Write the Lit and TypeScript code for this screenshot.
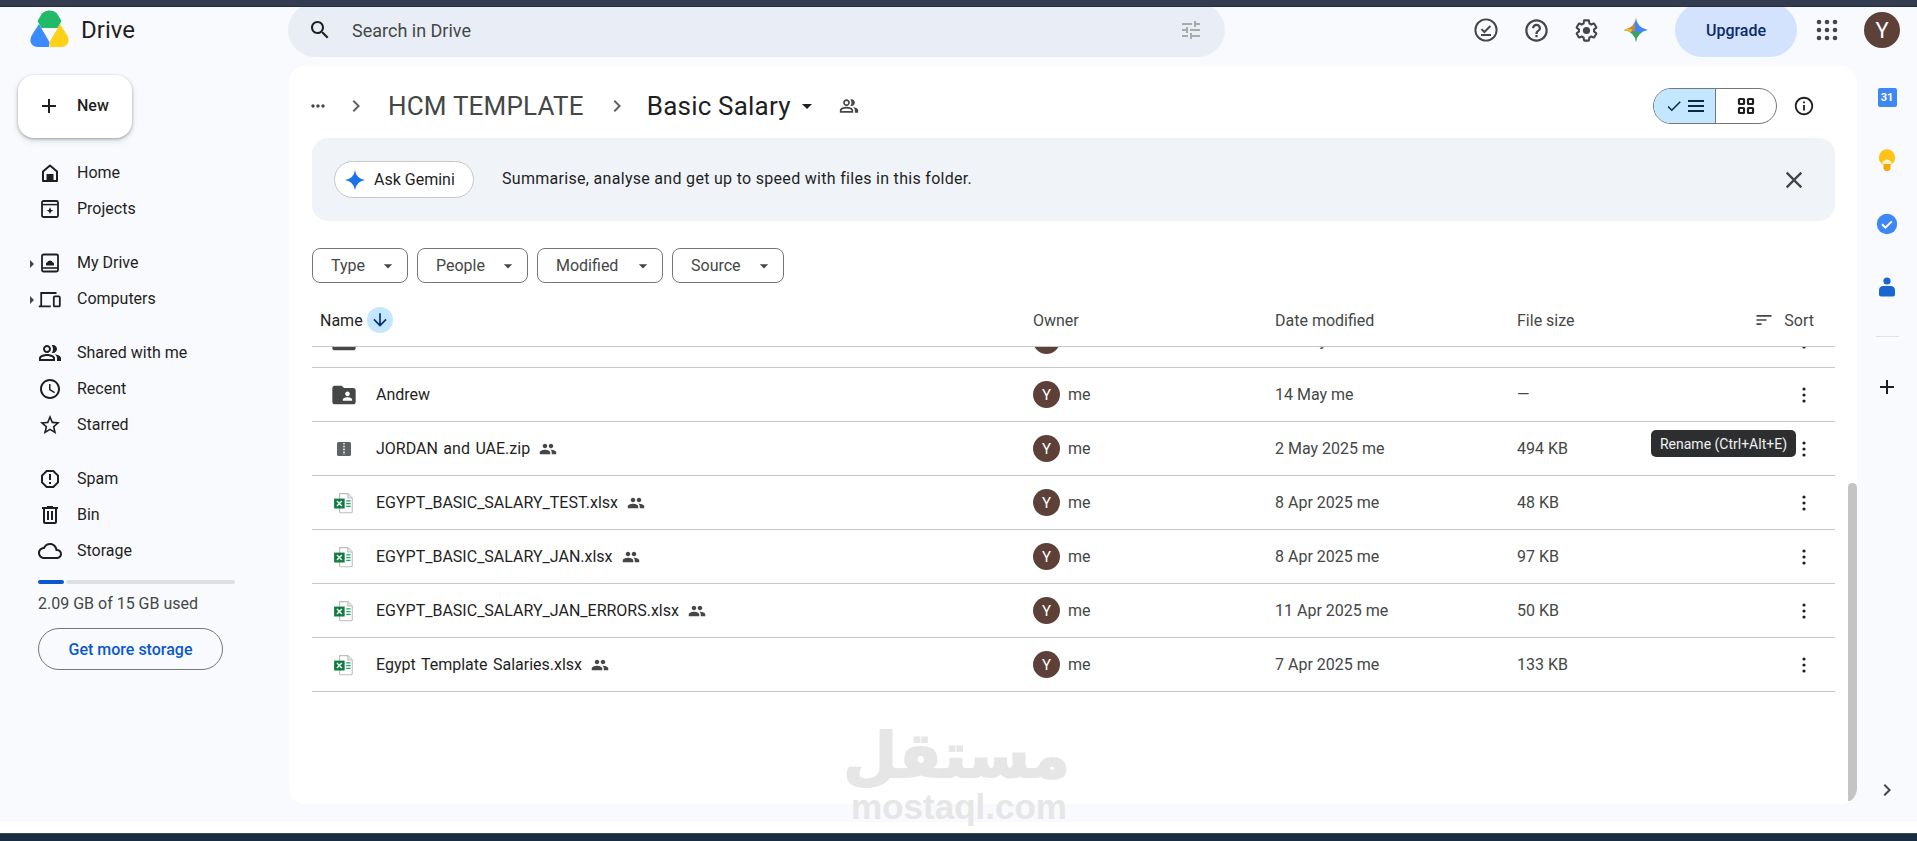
import { LitElement, html, svg, css } from "lit";
import { customElement } from "lit/decorators.js";

const P = {
  chevron: "M8.59 16.59L13.17 12 8.59 7.41 10 6l6 6-6 6z",
  shared: "M16.67 13.13C18.04 14.06 19 15.32 19 17v3h4v-3c0-2.18-3.57-3.47-6.33-3.87zM15 12c2.21 0 4-1.79 4-4s-1.79-4-4-4c-.47 0-.91.1-1.33.24C14.5 5.27 15 6.58 15 8s-.5 2.73-1.33 3.76c.42.14.86.24 1.33.24zM9 12c2.21 0 4-1.79 4-4s-1.79-4-4-4-4 1.79-4 4 1.79 4 4 4zm0-6c1.1 0 2 .9 2 2s-.9 2-2 2-2-.9-2-2 .9-2 2-2zM9 13c-2.67 0-8 1.34-8 4v3h16v-3c0-2.66-5.33-4-8-4zm6 5H3v-.99C3.2 16.29 6.3 15 9 15s5.8 1.29 6 2v1z",
  clock: "M11.99 2C6.47 2 2 6.48 2 12s4.47 10 9.99 10C17.52 22 22 17.52 22 12S17.52 2 11.99 2zM12 20c-4.42 0-8-3.58-8-8s3.58-8 8-8 8 3.58 8 8-3.58 8-8 8zM12.5 7H11v6l5.25 3.15.75-1.23-4.5-2.67z",
  star: "M22 9.24l-7.19-.62L12 2 9.19 8.63 2 9.24l5.46 4.73L5.82 21 12 17.27 18.18 21l-1.63-7.03L22 9.24zM12 15.4l-3.76 2.27 1-4.28-3.32-2.88 4.38-.38L12 6.1l1.71 4.04 4.38.38-3.32 2.88 1 4.28L12 15.4z",
  spam: "M15.73 3H8.27L3 8.27v7.46L8.27 21h7.46L21 15.73V8.27L15.73 3zM19 14.9L14.9 19H9.1L5 14.9V9.1L9.1 5h5.8L19 9.1v5.8zM11 7h2v6h-2zM11 15h2v2h-2z",
  bin: "M15 4V3H9v1H4v2h1v13c0 1.1.9 2 2 2h10c1.1 0 2-.9 2-2V6h1V4h-5zm2 15H7V6h10v13zM9 8h2v9H9zm4 0h2v9h-2z",
  cloud: "M19.35 10.04C18.67 6.59 15.64 4 12 4 9.11 4 6.6 5.64 5.35 8.04 2.34 8.36 0 10.91 0 14c0 3.31 2.69 6 6 6h13c2.76 0 5-2.24 5-5 0-2.64-2.05-4.78-4.65-4.96zM19 18H6c-2.21 0-4-1.79-4-4 0-2.05 1.53-3.76 3.56-3.97l1.07-.11.5-.95C8.08 7.14 9.94 6 12 6c2.62 0 4.88 1.86 5.39 4.43l.3 1.5 1.53.11c1.56.1 2.78 1.41 2.78 2.96 0 1.65-1.35 3-3 3z",
  search: "M15.5 14h-.79l-.28-.27C15.41 12.59 16 11.11 16 9.5 16 5.91 13.09 3 9.5 3S3 5.91 3 9.5 5.91 16 9.5 16c1.61 0 3.09-.59 4.23-1.57l.27.28v.79l5 4.99L20.49 19l-4.99-5zm-6 0C7.01 14 5 11.99 5 9.5S7.01 5 9.5 5 14 7.01 14 9.5 11.99 14 9.5 14z",
  tune: "M3 17v2h6v-2H3zM3 5v2h10V5H3zm10 16v-2h8v-2h-8v-2h-2v6h2zM7 9v2H3v2h4v2h2V9H7zm14 4v-2H11v2h10zm-6-4h2V7h4V5h-4V3h-2v6z",
  help: "M11 18h2v-2h-2v2zm1-16C6.48 2 2 6.48 2 12s4.48 10 10 10 10-4.48 10-10S17.52 2 12 2zm0 18c-4.41 0-8-3.59-8-8s3.59-8 8-8 8 3.59 8 8-3.59 8-8 8zm0-14c-2.21 0-4 1.79-4 4h2c0-1.1.9-2 2-2s2 .9 2 2c0 2-3 1.75-3 5h2c0-2.25 3-2.5 3-5 0-2.21-1.79-4-4-4z",
  info: "M11 7h2v2h-2zm0 4h2v6h-2zm1-9C6.48 2 2 6.48 2 12s4.48 10 10 10 10-4.48 10-10S17.52 2 12 2zm0 18c-4.41 0-8-3.59-8-8s3.59-8 8-8 8 3.59 8 8-3.59 8-8 8z",
  folderShared: "M20 6h-8l-2-2H4c-1.1 0-2 .9-2 2v12c0 1.1.9 2 2 2h16c1.1 0 2-.9 2-2V8c0-1.1-.9-2-2-2zm-5 3c1.1 0 2 .9 2 2s-.9 2-2 2-2-.9-2-2 .9-2 2-2zm4 8h-8v-1c0-1.33 2.67-2 4-2s4 .67 4 2v1z",
  people: "M16 11c1.66 0 2.99-1.34 2.99-3S17.66 5 16 5c-1.66 0-3 1.34-3 3s1.34 3 3 3zm-8 0c1.66 0 2.99-1.34 2.99-3S9.66 5 8 5C6.34 5 5 6.34 5 8s1.34 3 3 3zm0 2c-2.33 0-7 1.17-7 3.5V19h14v-2.5c0-2.33-4.67-3.5-7-3.5zm8 0c-.29 0-.62.02-.97.05 1.16.84 1.97 1.97 1.97 3.45V19h6v-2.5c0-2.33-4.67-3.5-7-3.5z",
  plus: "M19 13h-6v6h-2v-6H5v-2h6V5h2v6h6v2z",
  close: "M19 6.41L17.59 5 12 10.59 6.41 5 5 6.41 10.59 12 5 17.59 6.41 19 12 13.41 17.59 19 19 17.59 13.41 12z",
  caret: "M7 10l5 5 5-5z",
  down: "M20 12l-1.41-1.41L13 16.17V4h-2v12.17l-5.58-5.59L4 12l8 8 8-8z",
  check: "M9 16.17L4.83 12l-1.42 1.41L9 19 21 7l-1.41-1.41z",
  sort: "M3 18h6v-2H3v2zM3 6v2h18V6H3zm0 7h12v-2H3v2z",
  spark: "M12 1Q13 10 23 12Q13 14 12 23Q11 14 1 12Q11 10 12 1Z",
  more: "M6 10c-1.1 0-2 .9-2 2s.9 2 2 2 2-.9 2-2-.9-2-2-2zm12 0c-1.1 0-2 .9-2 2s.9 2 2 2 2-.9 2-2-.9-2-2-2zm-6 0c-1.1 0-2 .9-2 2s.9 2 2 2 2-.9 2-2-.9-2-2-2z",
};

const icon = (d: string, size = 24, color = "currentColor") => html`<svg class="ic" width=${size} height=${size} viewBox="0 0 24 24" fill=${color}><path d=${d}></path></svg>`;

const homeIcon = html`<svg class="ic" width="24" height="24" viewBox="0 0 24 24"><path d="M5 10.5L12 4.6l7 5.9V20H5z" fill="none" stroke="#1f1f1f" stroke-width="2" stroke-linejoin="round"></path><rect x="8.5" y="13" width="7" height="7" fill="#1f1f1f"></rect></svg>`;
const projectsIcon = html`<svg class="ic" width="24" height="24" viewBox="0 0 24 24"><rect x="4" y="4" width="16" height="16" rx="1.5" fill="none" stroke="#1f1f1f" stroke-width="1.8"></rect><path d="M4 7.6h16" stroke="#1f1f1f" stroke-width="1.5"></path><path d="M12 10.2Q12.4 13 15.4 13.6Q12.4 14.2 12 17Q11.6 14.2 8.6 13.6Q11.6 13 12 10.2Z" fill="#1f1f1f"></path></svg>`;
const driveIcon = html`<svg class="ic" width="24" height="24" viewBox="0 0 24 24"><rect x="4" y="3.5" width="16" height="17" rx="1.5" fill="none" stroke="#1f1f1f" stroke-width="1.8"></rect><path d="M4 17h16" stroke="#1f1f1f" stroke-width="1.6"></path><path d="M8 14.5v-1.6a1.6 1.6 0 0 1 1.3-1.6 2.9 2.9 0 0 1 5.4 0A1.6 1.6 0 0 1 16 12.9v1.6z" fill="#1f1f1f"></path></svg>`;
const computersIcon = html`<svg class="ic" width="24" height="24" viewBox="0 0 24 24"><path d="M3.2 18.5V6h15.3M.8 19.4h12" fill="none" stroke="#1f1f1f" stroke-width="1.8"></path><rect x="15.8" y="9.4" width="6" height="10" rx="1" fill="none" stroke="#1f1f1f" stroke-width="1.8"></rect></svg>`;
const offlineIcon = html`<svg class="ic" width="26" height="26" viewBox="0 0 24 24" fill="none" stroke="#444746" stroke-width="1.8"><circle cx="12" cy="12" r="9.8"></circle><path d="M7.8 11.2l2.7 2.7 5.6-5.6M7.4 16.6h9.2"></path></svg>`;
const gearIcon = html`<svg class="ic" width="27" height="27" viewBox="0 0 24 24"><path d="M19.43 12.98c.04-.32.07-.64.07-.98s-.03-.66-.07-.98l2.11-1.65c.19-.15.24-.42.12-.64l-2-3.46c-.12-.22-.39-.3-.61-.22l-2.49 1c-.52-.4-1.08-.73-1.69-.98l-.38-2.65C14.46 2.18 14.25 2 14 2h-4c-.25 0-.46.18-.49.42l-.38 2.65c-.61.25-1.17.59-1.69.98l-2.49-1c-.23-.09-.49 0-.61.22l-2 3.46c-.13.22-.07.49.12.64l2.11 1.65c-.04.32-.07.65-.07.98s.03.66.07.98l-2.11 1.65c-.19.15-.24.42-.12.64l2 3.46c.12.22.39.3.61.22l2.49-1c.52.4 1.08.73 1.69.98l.38 2.65c.03.24.24.42.49.42h4c.25 0 .46-.18.49-.42l.38-2.65c.61-.25 1.17-.59 1.69-.98l2.49 1c.23.09.49 0 .61-.22l2-3.46c.12-.22.07-.49-.12-.64l-2.11-1.65z" fill="none" stroke="#444746" stroke-width="2" transform="translate(1.2 1.2) scale(.9)"></path><circle cx="12" cy="12" r="3.2" fill="#444746"></circle></svg>`;
const geminiIcon = html`<svg class="ic" width="26" height="26" viewBox="0 0 24 24"><defs><clipPath id="gem"><path d=${P.spark}></path></clipPath></defs><g clip-path="url(#gem)"><rect width="24" height="24" fill="#4285f4"></rect><rect width="11" height="13" fill="#c98a3c"></rect><rect y="11" width="8" height="3" fill="#f9bc15"></rect><rect x="7" y="14" width="10" height="10" fill="#34a853"></rect></g></svg>`;
const appsIcon = html`<svg class="ic" width="24" height="24" viewBox="0 0 24 24" fill="#444746">${[4, 12, 20].map((y) => [4, 12, 20].map((x) => svg`<circle cx=${x} cy=${y} r="2.3"></circle>`))}</svg>`;
const gridIcon = html`<svg class="ic" width="20" height="20" viewBox="0 0 20 20" fill="none" stroke="#1f1f1f" stroke-width="2.2">${[3, 12].map((y) => [3, 12].map((x) => svg`<rect x=${x} y=${y} width="5" height="5" rx=".6"></rect>`))}</svg>`;
const listIcon = html`<svg class="ic" width="18" height="18" viewBox="0 0 18 18"><path d="M1 4h16M1 9h16M1 14h16" stroke="#0b2a44" stroke-width="2"></path></svg>`;
const dotsIcon = html`<svg class="ic" width="20" height="20" viewBox="0 0 20 20" fill="#1f1f1f"><circle cx="10" cy="4" r="1.6"></circle><circle cx="10" cy="10" r="1.6"></circle><circle cx="10" cy="16" r="1.6"></circle></svg>`;
const excelIcon = html`<svg class="ic" width="22" height="22" viewBox="0 0 20 20"><path d="M6 1.5h7.5l4 4V18a.8.8 0 0 1-.8.8H6.8A.8.8 0 0 1 6 18z" fill="#fff" stroke="#bdbdbd"></path><path d="M13.5 1.5v4h4" fill="#e8e8e8" stroke="#bdbdbd"></path><rect x="1" y="6" width="9.6" height="9" fill="#107c41"></rect><path d="M3.6 8.2l4.4 4.6M8 8.2l-4.4 4.6" stroke="#fff" stroke-width="1.2"></path><path d="M12 8h4M12 10.5h4M12 13h4" stroke="#21a366" stroke-width="1.2"></path></svg>`;
const zipIcon = html`<svg class="ic" width="20" height="20" viewBox="0 0 20 20"><rect x="3" y="3" width="14" height="14" rx="1.5" fill="#5f6368"></rect><path d="M9 4.5h2M9 7.5h2M9 10.5h2M9 13.5h2" stroke="#d5d5d5" stroke-width="1"></path><path d="M11 6h-2M11 9h-2M11 12h-2M11 15h-2" stroke="#a9a9a9" stroke-width="1"></path></svg>`;
const logo = html`<svg width="39" height="37" viewBox="0 0 39 37"><path d="M9 14L19.5 32 19 37H8Q3 37 1 33Q-.6 29 2 25z" fill="#3b8bff"></path><path d="M30 14L19.5 32 20 37H31Q36 37 38 33Q39.6 29 37 25z" fill="#ffd118"></path><path d="M12 3.5Q15 .5 19.5 .5T27 3.5L31.5 11 27.5 18H11.5L7.5 11z" fill="#20ba68"></path><path d="M11.5 18h16L19.5 31.5z" fill="#f8fafd"></path></svg>`;
const bulbIcon = html`<svg width="20" height="24" viewBox="0 0 20 24"><circle cx="10" cy="8.5" r="8.2" fill="#fcc419"></circle><path d="M5.5 13Q10 8 14.5 13V15H5.5z" fill="#fff3cd"></path><path d="M6.5 15h7v4a3 3 0 0 1-3 3h-1a3 3 0 0 1-3-3z" fill="#f2a900"></path></svg>`;
const calendarIcon = html`<div class="cal">31</div>`;
const tasksIcon = html`<svg width="22" height="22" viewBox="0 0 22 22"><circle cx="11" cy="11" r="10.2" fill="#3f87f5"></circle><path d="M6 11.2l3.4 3.4 6.4-6.2" fill="none" stroke="#fff" stroke-width="2"></path></svg>`;
const contactsIcon = html`<svg width="18" height="20" viewBox="0 0 18 20"><circle cx="9" cy="4" r="3.6" fill="#1a66d0"></circle><path d="M1 17.5V13.5Q1 9 5.5 9h7Q17 9 17 13.5V17.5Q17 19.5 15 19.5H3Q1 19.5 1 17.5z" fill="#1a66d0"></path></svg>`;

type Nav = { label: string; ic: unknown; caret?: boolean };

const navGroups: Nav[][] = [
  [{ label: "Home", ic: homeIcon }, { label: "Projects", ic: projectsIcon }],
  [{ label: "My Drive", ic: driveIcon, caret: true }, { label: "Computers", ic: computersIcon, caret: true }],
  [{ label: "Shared with me", ic: icon(P.shared) }, { label: "Recent", ic: icon(P.clock) }, { label: "Starred", ic: icon(P.star) }],
  [{ label: "Spam", ic: icon(P.spam) }, { label: "Bin", ic: icon(P.bin) }, { label: "Storage", ic: icon(P.cloud) }],
];

const files = [
  { name: "", kind: "folder", date: "14 May me", size: "", shared: false },
  { name: "Andrew", kind: "shared", date: "14 May me", size: "—", shared: false },
  { name: "JORDAN and UAE.zip", kind: "zip", date: "2 May 2025 me", size: "494 KB", shared: true },
  { name: "EGYPT_BASIC_SALARY_TEST.xlsx", kind: "xlsx", date: "8 Apr 2025 me", size: "48 KB", shared: true },
  { name: "EGYPT_BASIC_SALARY_JAN.xlsx", kind: "xlsx", date: "8 Apr 2025 me", size: "97 KB", shared: true },
  { name: "EGYPT_BASIC_SALARY_JAN_ERRORS.xlsx", kind: "xlsx", date: "11 Apr 2025 me", size: "50 KB", shared: true },
  { name: "Egypt Template Salaries.xlsx", kind: "xlsx", date: "7 Apr 2025 me", size: "133 KB", shared: true },
];

const fileIcon = (kind: string) => {
  if (kind === "zip") return zipIcon;
  if (kind === "xlsx") return excelIcon;
  return icon(P.folderShared, 28, "#444746");
};

@customElement("app-root")
export class AppRoot extends LitElement {
  static styles = css`
    :host {
      display: block;
      position: relative;
      height: 841px;
      overflow: hidden;
      background: #fff;
      font-family: Roboto, "Liberation Sans", sans-serif;
      font-size: 16px;
      color: #1f1f1f;
    }
    .ic { display: block; flex: none; }
    .topstrip { position: relative; z-index: 2; height: 7px; background: #343d50; border-bottom: 1px solid #262e3e; box-sizing: border-box; }
    .bottomstrip { margin-top: 11px; height: 8px; background: #192c42; border-top: 1px solid #3a4658; box-sizing: border-box; }
    .shell {
      display: grid;
      grid-template-columns: 288px 1fr 60px;
      grid-template-rows: 59px 756px;
      background: #f8fafd;
    }
    .brand { display: flex; align-items: flex-start; padding: 3px 0 0 30px; gap: 12px; }
    .brand span { font-size: 24px; line-height: 40px; color: #1f1f1f; }
    .topbar { grid-column: 2 / 4; display: flex; align-items: center; height: 46px; }
    .search {
      flex: none;
      width: 937px;
      height: 54px;
      box-sizing: border-box;
      border-radius: 27px;
      background: #e9eef6;
      display: flex;
      align-items: center;
      padding: 0 22px 0 20px;
      color: #444746;
      font-size: 18px;
    }
    .search span { margin-left: 20px; flex: 1; }
    .tools { margin-left: auto; display: flex; align-items: center; padding-right: 17px; }
    .tool { width: 50px; display: flex; justify-content: center; }
    .upgrade {
      margin-left: 14px;
      width: 122px;
      height: 54px;
      border-radius: 27px;
      background: #d3e3fd;
      color: #0b2a6b;
      font-weight: 500;
      display: flex;
      align-items: center;
      justify-content: center;
    }
    .apps { width: 60px; display: flex; justify-content: center; }
    .avatar { margin-left: 7px; width: 36px; height: 36px; border-radius: 50%; background: #5d4037; color: #fff; font-size: 22px; display: flex; align-items: center; justify-content: center; }

    .side { display: flex; flex-direction: column; align-items: flex-start; }
    .new {
      margin: 9px 0 17px 18px;
      width: 114px;
      height: 63px;
      border-radius: 16px;
      background: #fff;
      box-shadow: 0 1px 3px rgba(60, 64, 67, .4), 0 3px 6px rgba(60, 64, 67, .15);
      display: flex;
      align-items: center;
      gap: 16px;
      padding: 0 0 2px 19px;
      box-sizing: border-box;
      font-weight: 500;
    }
    .group { margin-bottom: 18px; }
    .nav { position: relative; display: flex; align-items: center; height: 36px; padding-left: 38px; gap: 15px; color: #1f1f1f; }
    .nav span { margin-top: -2px; }
    .nav .tri { position: absolute; left: 30px; top: 15px; width: 0; height: 0; border-left: 4px solid #444746; border-top: 4px solid transparent; border-bottom: 4px solid transparent; }
    .usage { margin: -7px 0 0 38px; width: 197px; height: 4px; display: flex; gap: 2px; }
    .usage .fill { width: 26px; background: #0b57d0; border-radius: 2px; }
    .usage .rest { flex: 1; background: #e0e0e0; border-radius: 2px; }
    .quota { margin: 12px 0 0 38px; color: #444746; line-height: 16px; }
    .more { margin: 16px 0 0 38px; width: 185px; height: 42px; box-sizing: border-box; border: 1px solid #747775; border-radius: 21px; color: #0b57d0; font-weight: 500; display: flex; align-items: center; justify-content: center; }

    .panel {
      position: relative;
      margin: 0 0 18px 1px;
      background: #fff;
      border-radius: 16px;
      padding: 22px 22px 0 23px;
      display: flex;
      flex-direction: column;
      overflow: hidden;
      min-height: 0;
    }
    .crumbs { display: flex; align-items: center; height: 36px; color: #444746; flex: none; }
    .crumbs .t { font-size: 26px; line-height: 36px; letter-spacing: .2px; }
    .crumbs .cur { color: #1f1f1f; }
    .views { margin-left: auto; display: flex; height: 36px; width: 124px; box-sizing: border-box; border: 1px solid #747775; border-radius: 18px; overflow: hidden; }
    .views .on { width: 61px; background: #c2e7ff; border-right: 1px solid #747775; display: flex; align-items: center; justify-content: center; gap: 4px; }
    .views .off { flex: 1; display: flex; align-items: center; justify-content: center; }
    .inf { margin: 0 20px 0 16px; }
    .banner { flex: none; margin-top: 14px; height: 83px; border-radius: 16px; background: #f0f4f9; display: flex; align-items: center; padding: 0 27px 0 22px; }
    .ask { width: 140px; height: 37px; box-sizing: border-box; background: #fff; border: 1px solid #c4c7c5; border-radius: 19px; display: flex; align-items: center; padding-left: 9px; gap: 8px; }
    .banner p { margin: 0 0 2px 28px; flex: 1; color: #1f1f1f; letter-spacing: .3px; }
    .filters { flex: none; display: flex; gap: 9px; margin-top: 27px; }
    .filter { height: 35px; box-sizing: border-box; border: 1px solid #747775; border-radius: 8px; display: flex; align-items: center; justify-content: space-between; padding: 0 9px 0 18px; color: #444746; }
    .thead, .row { display: grid; align-items: center; }
    .thead { flex: none; grid-template-columns: 721px 242px 242px 1fr auto; margin-top: 11px; height: 53px; box-sizing: border-box; border-bottom: 1px solid #c7c7c7; color: #444746; }
    .namehead { display: flex; align-items: center; padding-left: 8px; gap: 4px; color: #1f1f1f; }
    .arrow { width: 26px; height: 26px; border-radius: 50%; background: #c2e7ff; display: flex; align-items: center; justify-content: center; }
    .sorthead { display: flex; align-items: center; gap: 10px; padding-right: 21px; }
    .list { flex: 1; min-height: 0; overflow: hidden; }
    .row { grid-template-columns: 721px 242px 242px 1fr 40px 11px; height: 54px; box-sizing: border-box; border-bottom: 1px solid #c7c7c7; color: #444746; }
    .row:first-child { margin-top: -33px; }
    .fname { display: flex; align-items: center; color: #1f1f1f; padding-left: 18px; word-spacing: 1.5px; }
    .ficon { width: 28px; display: flex; justify-content: center; margin-right: 18px; }
    .fname .sh { margin-left: 9px; }
    .owner { display: flex; align-items: center; gap: 8px; }
    .mini { width: 27px; height: 27px; border-radius: 50%; background: #5d4037; color: #fff; font-size: 15px; display: flex; align-items: center; justify-content: center; }
    .act { display: flex; justify-content: center; }
    .tip { position: absolute; left: 1362px; top: 364px; width: 145px; height: 27px; border-radius: 5px; background: #2d2e2f; color: #f1f1f1; font-size: 14px; display: flex; align-items: center; justify-content: center; }
    .bar { position: absolute; right: 0; top: 417px; bottom: 3px; width: 9px; background: #c4c4c4; border-radius: 5px 5px 8px 0; }

    .rail { display: flex; flex-direction: column; align-items: center; padding-bottom: 20px; }
    .slot { height: 63px; flex: none; display: flex; align-items: center; justify-content: center; }
    .cal { width: 19px; height: 19px; border-radius: 2px; background: #3f87f5; color: #fff; font-size: 11px; font-weight: 700; display: flex; align-items: center; justify-content: center; }
    .rule { margin-top: 18px; width: 23px; border-top: 1px solid #e3e3e3; flex: none; }
    .add { margin-top: 38px; }
    .next { margin-top: auto; color: #444746; }

    .mark { position: absolute; left: 848px; top: 718px; width: 222px; color: #e6e6e6; pointer-events: none; text-align: center; }
    .mark .ar { font-family: "DejaVu Sans", sans-serif; font-weight: 700; font-size: 62px; line-height: 76px; white-space: nowrap; -webkit-text-stroke: 2px #e6e6e6; }
    .mark .la { font-family: "Liberation Sans", sans-serif; font-weight: 700; font-size: 35px; line-height: 26px; }
  `;

  render() {
    return html`
      <div class="topstrip"></div>
      <div class="shell">
        <div class="brand">${logo}<span>Drive</span></div>
        <div class="topbar">
          <div class="search">${icon(P.search, 24, "#1f1f1f")}<span>Search in Drive</span>${icon(P.tune, 24, "#a8abac")}</div>
          <div class="tools">
            <div class="tool">${offlineIcon}</div>
            <div class="tool">${icon(P.help, 27, "#444746")}</div>
            <div class="tool">${gearIcon}</div>
            <div class="tool">${geminiIcon}</div>
            <div class="upgrade">Upgrade</div>
            <div class="apps">${appsIcon}</div>
            <div class="avatar">Y</div>
          </div>
        </div>

        <aside class="side">
          <div class="new">${icon(P.plus, 24, "#1f1f1f")}New</div>
          ${navGroups.map((g) => html`
            <div class="group">
              ${g.map((n) => html`<div class="nav">${n.caret ? html`<i class="tri"></i>` : ""}${n.ic}<span>${n.label}</span></div>`)}
            </div>`)}
          <div class="usage"><div class="fill"></div><div class="rest"></div></div>
          <div class="quota">2.09 GB of 15 GB used</div>
          <div class="more">Get more storage</div>
        </aside>

        <main class="panel">
          <div class="crumbs">
            <span style="margin-left:-4px">${icon(P.more, 20)}</span>
            <span style="margin-left:16px">${icon(P.chevron, 24, "#5f6368")}</span>
            <span class="t" style="margin-left:20px">HCM TEMPLATE</span>
            <span style="margin-left:21px">${icon(P.chevron, 24, "#5f6368")}</span>
            <span class="t cur" style="margin-left:18px">Basic Salary</span>
            <span style="margin-left:4px">${icon(P.caret, 24, "#1f1f1f")}</span>
            <span style="margin-left:20px">${icon(P.shared, 20, "#444746")}</span>
            <div class="views">
              <div class="on">${icon(P.check, 18, "#0b2a44")}${listIcon}</div>
              <div class="off">${gridIcon}</div>
            </div>
            <div class="inf">${icon(P.info, 22, "#1f1f1f")}</div>
          </div>

          <div class="banner">
            <div class="ask">${icon(P.spark, 22, "#1a73e8")}<span>Ask Gemini</span></div>
            <p>Summarise, analyse and get up to speed with files in this folder.</p>
            ${icon(P.close, 28, "#444746")}
          </div>

          <div class="filters">
            ${[["Type", 96], ["People", 111], ["Modified", 126], ["Source", 112]].map(([f, w]) => html`
              <div class="filter" style="width:${w}px">${f}${icon(P.caret, 20, "#444746")}</div>`)}
          </div>

          <div class="thead">
            <div class="namehead">Name <span class="arrow">${icon(P.down, 20, "#0b2a6b")}</span></div>
            <div>Owner</div>
            <div>Date modified</div>
            <div>File size</div>
            <div class="sorthead">${icon(P.sort, 20, "#444746")}Sort</div>
          </div>

          <div class="list">
            ${files.map((f) => html`
              <div class="row">
                <div class="fname">
                  <span class="ficon">${fileIcon(f.kind)}</span>
                  ${f.name ? html`<span>${f.name}</span>` : ""}
                  ${f.shared ? html`<span class="sh">${icon(P.people, 18, "#444746")}</span>` : ""}
                </div>
                <div class="owner"><span class="mini">Y</span><span>me</span></div>
                <div>${f.date}</div>
                <div>${f.size}</div>
                <div class="act">${dotsIcon}</div>
                <div></div>
              </div>`)}
          </div>

          <div class="tip">Rename (Ctrl+Alt+E)</div>
          <div class="bar"></div>
        </main>

        <nav class="rail">
          <div class="slot">${calendarIcon}</div>
          <div class="slot">${bulbIcon}</div>
          <div class="slot">${tasksIcon}</div>
          <div class="slot">${contactsIcon}</div>
          <div class="rule"></div>
          <div class="add">${icon(P.plus, 24, "#1f1f1f")}</div>
          <div class="next">${icon(P.chevron, 24)}</div>
        </nav>
      </div>
      <div class="bottomstrip"></div>

      <div class="mark" dir="rtl">
        <div class="ar">مستقل</div>
        <div class="la" dir="ltr">mostaql.com</div>
      </div>
    `;
  }
}
